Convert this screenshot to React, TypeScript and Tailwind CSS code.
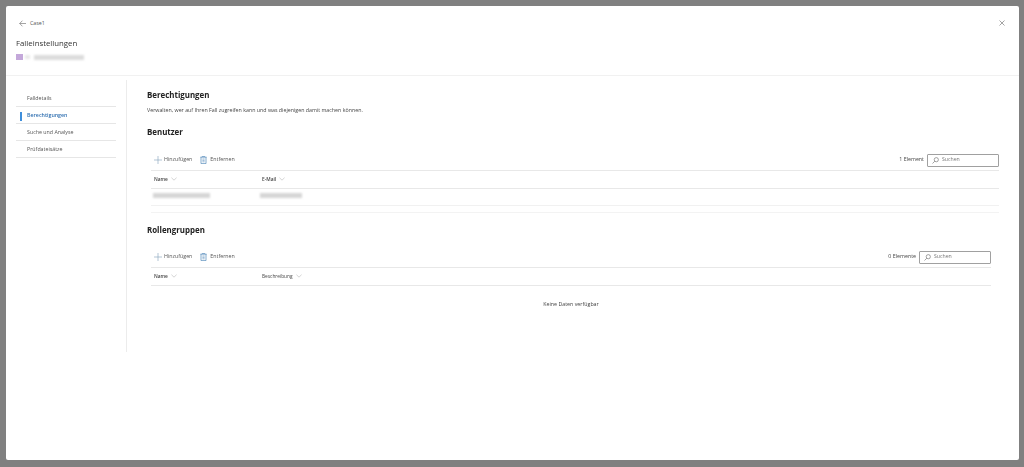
import React from "react";

const font = { fontFamily: '"Open Sans","Noto Sans",sans-serif' };

function Plus() {
  return (
    <svg width="8" height="8" viewBox="0 0 8 8" className="shrink-0">
      <path d="M4 0v8M0 4h8" stroke="#7f9fb8" strokeWidth="0.6" fill="none" />
    </svg>
  );
}
function Trash() {
  return (
    <svg width="7" height="8" viewBox="0 0 7 8" className="shrink-0">
      <path d="M2.3 1V.4h2.4V1M.4 1.2h6.2M1 1.2v6.4h5V1.2" stroke="#4f86b8" strokeWidth="0.7" fill="none" />
      <path d="M2.4 3h2.2M2.4 4.4h2.2M2.4 5.8h2.2" stroke="#4f86b8" strokeWidth="0.6" />
    </svg>
  );
}
function Chevron() {
  return (
    <svg width="6" height="4" viewBox="0 0 7 4" className="shrink-0">
      <path d="M.5.5 3.5 3.4 6.5.5" stroke="#9a9a9a" strokeWidth="0.5" fill="none" />
    </svg>
  );
}
function SearchBox({ w }: { w: string }) {
  return (
    <div className={`flex h-[13px] items-center gap-[3px] rounded-[1px] border border-[#a0a0a0] bg-white pl-[4px] ${w}`}>
      <svg width="7" height="7" viewBox="0 0 7 7" className="shrink-0">
        <circle cx="4.3" cy="2.7" r="2.1" stroke="#666" strokeWidth="0.6" fill="none" />
        <path d="M2.8 4.2.5 6.5" stroke="#666" strokeWidth="0.6" />
      </svg>
      <span className="text-[5.2px] leading-none text-[#777]">Suchen</span>
    </div>
  );
}
function Toolbar({ count, w }: { count: string; w: string }) {
  return (
    <div className="flex h-[20px] items-center justify-between">
      <div className="flex items-center pl-[3px]">
        <Plus />
        <span className="ml-[2px] text-[5.3px] leading-none text-[#555]">Hinzufügen</span>
        <span className="ml-[8px]"><Trash /></span>
        <span className="ml-[3px] text-[5.3px] leading-none text-[#555]">Entfernen</span>
      </div>
      <div className="flex items-center gap-[3px]">
        <span className="text-[5.3px] leading-none text-[#444]">{count}</span>
        <SearchBox w={w} />
      </div>
    </div>
  );
}
function HeaderRow({ second, strong }: { second: string; strong?: boolean }) {
  return (
    <div className="flex h-[19px] items-center border-y border-[#e8e8e8] pl-[3px]">
      <div className="flex w-[108px] items-center gap-[3px]">
        <span className="text-[4.8px] leading-none font-semibold text-[#444]">Name</span>
        <Chevron />
      </div>
      <div className="flex items-center gap-[3px]">
        <span className={`text-[4.8px] leading-none text-[#444] ${strong ? "font-semibold" : ""}`}>{second}</span>
        <Chevron />
      </div>
    </div>
  );
}
function Smudge({ w, h = "h-[5px]" }: { w: string; h?: string }) {
  return <div className={`${w} ${h} bg-[#d6d6d6] blur-[1px]`} />;
}
function NavItem({ label, active }: { label: string; active?: boolean }) {
  return (
    <div className="relative flex h-[17px] items-center border-b border-[#e6e6e6] pl-[11px] pt-[2px]">
      {active && <div className="absolute left-[4px] top-[5px] h-[9px] w-[2px] bg-[#3f8fdc]" />}
      <span className={`text-[5.3px] leading-none ${active ? "font-semibold text-[#2f6fb0]" : "text-[#555]"}`}>{label}</span>
    </div>
  );
}

export default function App() {
  return (
    <div style={font} className="h-[467px] w-[1024px] overflow-hidden bg-[#808080] pl-[6px] pt-[6px]">
      <div className="flex h-[454px] w-[1013px] flex-col rounded-[2px] bg-white blur-[0.3px]">
        <header className="h-[70px] shrink-0 border-b border-[#f1f1f1] pl-[10px] pr-[14px]">
          <div className="flex items-center justify-between pt-[13px]">
            <div className="flex h-[8px] items-center gap-[4px] pl-[3px]">
              <svg width="7" height="7" viewBox="0 0 7 7">
                <path d="M7 3.5H.7M3.4.7.7 3.5l2.7 2.8" stroke="#666" strokeWidth="0.6" fill="none" />
              </svg>
              <span className="pt-[2px] text-[5.3px] leading-none text-[#555]">Case1</span>
            </div>
            <svg width="6" height="6" viewBox="0 0 6 6">
              <path d="M.5.5l5 5M5.5.5l-5 5" stroke="#666" strokeWidth="0.6" />
            </svg>
          </div>
          <h1 className="mt-[10px] text-[7.8px] leading-[12px] font-normal text-[#333]">Falleinstellungen</h1>
          <div className="mt-[5px] flex items-center">
            <div className="h-[6px] w-[7px] bg-[#c4a8da] blur-[0.6px]" />
            <div className="ml-[2px] h-[4px] w-[5px] bg-[#e8e8e8] blur-[0.8px]" />
            <div className="ml-[4px] h-[5px] w-[50px] bg-[#dcdcdc] blur-[1px]" />
          </div>
        </header>
        <div className="flex min-h-0 flex-1">
          <nav className="ml-[10px] w-[100px] shrink-0 pt-[14px]">
            <NavItem label="Falldetails" />
            <NavItem label="Berechtigungen" active />
            <NavItem label="Suche und Analyse" />
            <NavItem label="Prüfdateisätze" />
          </nav>
          <div className="ml-[10px] mt-[4px] h-[272px] w-px shrink-0 bg-[#ececec]" />
          <main className="flex-1 pl-[20px] pr-[20px] pt-[13px]">
            <h2 className="text-[7.9px] leading-[12px] font-bold text-[#222]">Berechtigungen</h2>
            <p className="mt-[5px] text-[5.3px] leading-[8px] text-[#444]">
              Verwalten, wer auf Ihren Fall zugreifen kann und was diejenigen damit machen können.
            </p>
            <h2 className="mt-[12px] text-[7.9px] leading-[12px] font-bold text-[#222]">Benutzer</h2>
            <div className="ml-[4px] mt-[12px]">
              <Toolbar count="1 Element" w="w-[72px]" />
              <HeaderRow second="E-Mail" strong />
              <div className="flex h-[17px] items-center border-b border-[#f1f1f1] pb-[3px] pl-[2px]">
                <div className="w-[107px]"><Smudge w="w-[57px]" /></div>
                <Smudge w="w-[42px]" />
              </div>
              <div className="mt-[6px] h-px bg-[#f3f3f3]" />
            </div>
            <h2 className="mt-[11px] text-[7.9px] leading-[12px] font-bold text-[#222]">Rollengruppen</h2>
            <div className="ml-[4px] mr-[8px] mt-[11px]">
              <Toolbar count="0 Elemente" w="w-[72px]" />
              <HeaderRow second="Beschreibung" />
              <div className="pt-[14px] text-center text-[5.3px] leading-[8px] text-[#444]">Keine Daten verfügbar</div>
            </div>
          </main>
        </div>
      </div>
    </div>
  );
}
